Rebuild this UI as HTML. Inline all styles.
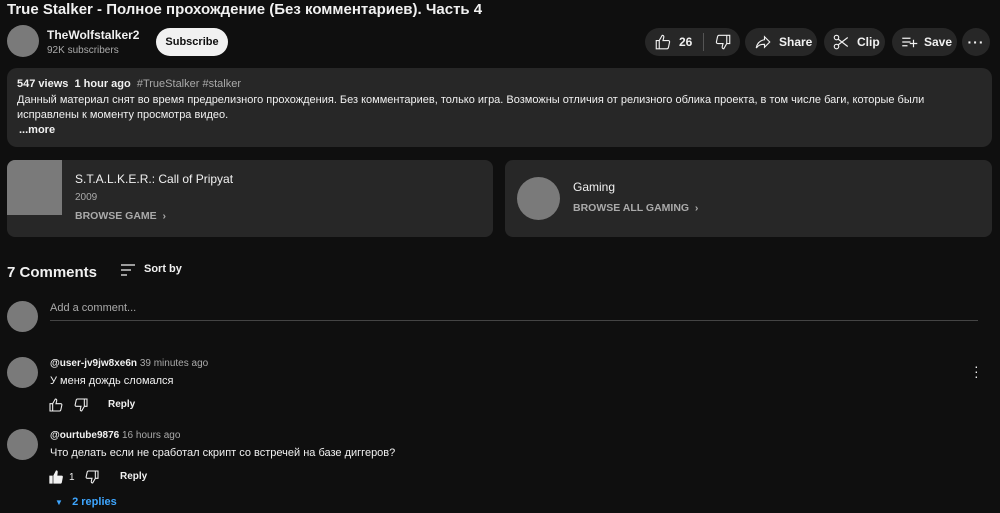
<!DOCTYPE html>
<html><head><meta charset="utf-8"><style>
*{margin:0;padding:0;box-sizing:border-box}
body{width:1000px;height:513px;overflow:hidden;background:#0f0f0f;color:#f1f1f1;font-family:"Liberation Sans","Noto Sans CJK SC",sans-serif;position:relative}
.a{position:absolute}
.av{position:absolute;border-radius:50%;background:#7a7a7a}
.btn{position:absolute;background:#272727;border-radius:14px;height:28px;top:28px;font-size:12px;font-weight:bold;display:flex;align-items:center}
.sm{font-size:11px}
.g{color:#aaa}
svg{display:block}
</style></head><body>
<div class="a" style="left:7px;top:0px;font-size:15px;font-weight:bold;line-height:20px">True Stalker - Полное прохождение (Без комментариев). Часть 4</div>
<div class="av" style="left:7px;top:25px;width:32px;height:32px"></div>
<div class="a" style="left:47px;top:28px;font-size:12px;font-weight:bold">TheWolfstalker2</div>
<div class="a g" style="left:47px;top:45px;font-size:10px">92K subscribers</div>
<div class="a" style="left:156px;top:28px;width:72px;height:28px;background:#f1f1f1;color:#0f0f0f;border-radius:14px;font-size:11px;font-weight:bold;text-align:center;line-height:28px">Subscribe</div>

<div class="btn" style="left:645px;width:95px">
<svg style="margin-left:9px" width="18" height="18" viewBox="0 0 24 24" fill="none" stroke="#f1f1f1" stroke-width="1.5"><path d="M3 10h4v11H3zM7 10l4-7c1.5 0 2.5 1 2 3l-1 4h7c1.2 0 2 1 1.8 2l-1.5 7c-.2 1-1 2-2 2H7"/></svg>
<span style="margin-left:7px">26</span>
<span style="margin-left:11px;width:1px;height:18px;background:#555"></span>
<svg style="margin-left:10px" width="18" height="18" viewBox="0 0 24 24" fill="none" stroke="#f1f1f1" stroke-width="1.5"><path d="M21 14h-4V3h4zM17 14l-4 7c-1.5 0-2.5-1-2-3l1-4H5c-1.2 0-2-1-1.8-2l1.5-7c.2-1 1-2 2-2H17"/></svg>
</div>
<div class="btn" style="left:745px;width:72px">
<svg style="margin-left:9px" width="18" height="18" viewBox="0 0 24 24" fill="none" stroke="#f1f1f1" stroke-width="1.5"><path d="M14 5l7 7-7 7v-4c-5 0-8 1-11 5 1-6 4-10 11-11z"/></svg><span style="margin-left:7px">Share</span></div>
<div class="btn" style="left:824px;width:61px">
<svg style="margin-left:8px" width="18" height="18" viewBox="0 0 24 24" fill="none" stroke="#f1f1f1" stroke-width="1.5"><circle cx="6" cy="6" r="3"/><circle cx="6" cy="18" r="3"/><path d="M8 8l13 10M8 16L21 6"/></svg><span style="margin-left:7px">Clip</span></div>
<div class="btn" style="left:892px;width:65px">
<svg style="margin-left:8px" width="18" height="18" viewBox="0 0 24 24" fill="none" stroke="#f1f1f1" stroke-width="1.6"><path d="M3 7h11M3 12h11M3 17h7M18 9v10M13 14h10"/></svg><span style="margin-left:6px">Save</span></div>
<div class="btn" style="left:962px;width:28px;justify-content:center;font-size:14px;letter-spacing:1px">···</div>

<div class="a" style="left:7px;top:68px;width:985px;height:79px;background:#272727;border-radius:10px"></div>
<div class="a sm" style="left:17px;top:78px"><b>547 views&nbsp; 1 hour ago</b>&nbsp; <span class="g">#TrueStalker #stalker</span></div>
<div class="a sm" style="left:17px;top:93px;width:960px;line-height:15px">Данный материал снят во время предрелизного прохождения. Без комментариев, только игра. Возможны отличия от релизного облика проекта, в том числе баги, которые были исправлены к моменту просмотра видео.</div>
<div class="a sm" style="left:19px;top:124px;font-weight:bold">...more</div>

<div class="a" style="left:7px;top:160px;width:486px;height:77px;background:#272727;border-radius:8px;overflow:hidden"><div style="width:55px;height:55px;background:#7a7a7a"></div></div>
<div class="a" style="left:75px;top:172px;font-size:12px">S.T.A.L.K.E.R.: Call of Pripyat</div>
<div class="a g" style="left:75px;top:192px;font-size:10px">2009</div>
<div class="a g" style="left:75px;top:210px;font-size:10.5px;font-weight:bold">BROWSE GAME&nbsp; ›</div>
<div class="a" style="left:505px;top:160px;width:487px;height:77px;background:#272727;border-radius:8px"></div>
<div class="av" style="left:517px;top:177px;width:43px;height:43px"></div>
<div class="a" style="left:573px;top:180px;font-size:12px">Gaming</div>
<div class="a g" style="left:573px;top:202px;font-size:10.5px;font-weight:bold">BROWSE ALL GAMING&nbsp; ›</div>

<div class="a" style="left:7px;top:264px;font-size:15px;font-weight:bold">7 Comments</div>
<svg class="a" style="left:120px;top:262px" width="16" height="16" viewBox="0 0 16 16" stroke="#f1f1f1" stroke-width="1.3"><path d="M1 3h14M1 8h10M1 13h6"/></svg>
<div class="a sm" style="left:144px;top:263px;font-weight:bold">Sort by</div>

<div class="av" style="left:7px;top:301px;width:31px;height:31px"></div>
<div class="a g" style="left:50px;top:302px;font-size:11px">Add a comment...</div>
<div class="a" style="left:50px;top:320px;width:928px;height:1px;background:#444"></div>

<div class="av" style="left:7px;top:357px;width:31px;height:31px"></div>
<div class="a" style="left:50px;top:358px;font-size:10px"><b>@user-jv9jw8xe6n</b> <span class="g">39 minutes ago</span></div>
<div class="a" style="left:50px;top:375px;font-size:11px">У меня дождь сломался</div>
<svg class="a" style="left:48px;top:397px" width="16" height="16" viewBox="0 0 24 24" fill="none" stroke="#f1f1f1" stroke-width="1.6"><path d="M3 10h4v11H3zM7 10l4-7c1.5 0 2.5 1 2 3l-1 4h7c1.2 0 2 1 1.8 2l-1.5 7c-.2 1-1 2-2 2H7"/></svg>
<svg class="a" style="left:73px;top:397px" width="16" height="16" viewBox="0 0 24 24" fill="none" stroke="#f1f1f1" stroke-width="1.6"><path d="M21 14h-4V3h4zM17 14l-4 7c-1.5 0-2.5-1-2-3l1-4H5c-1.2 0-2-1-1.8-2l1.5-7c.2-1 1-2 2-2H17"/></svg>
<div class="a" style="left:108px;top:399px;font-size:10px;font-weight:bold">Reply</div>
<div class="a" style="left:974px;top:364px;font-size:14px;line-height:5px;width:4px;text-align:center">·<br>·<br>·</div>

<div class="av" style="left:7px;top:429px;width:31px;height:31px"></div>
<div class="a" style="left:50px;top:430px;font-size:10px"><b>@ourtube9876</b> <span class="g">16 hours ago</span></div>
<div class="a" style="left:50px;top:447px;font-size:11px">Что делать если не сработал скрипт со встречей на базе диггеров?</div>
<svg class="a" style="left:48px;top:469px" width="16" height="16" viewBox="0 0 24 24" fill="#f1f1f1"><path d="M2 10h5v12H2zM8 10l4-8c2 0 3 1 2.5 3.5L14 10h6.5c1.2 0 2 1 1.8 2l-1.5 8c-.2 1-1 2-2 2H8z"/></svg>
<div class="a" style="left:69px;top:472px;font-size:10px">1</div>
<svg class="a" style="left:84px;top:469px" width="16" height="16" viewBox="0 0 24 24" fill="none" stroke="#f1f1f1" stroke-width="1.6"><path d="M21 14h-4V3h4zM17 14l-4 7c-1.5 0-2.5-1-2-3l1-4H5c-1.2 0-2-1-1.8-2l1.5-7c.2-1 1-2 2-2H17"/></svg>
<div class="a" style="left:120px;top:471px;font-size:10px;font-weight:bold">Reply</div>
<div class="a" style="left:55px;top:496px;font-size:11px;font-weight:bold;color:#3ea6ff"><span style="font-size:8px">▼</span>&nbsp;&nbsp; 2 replies</div>
</body></html>
